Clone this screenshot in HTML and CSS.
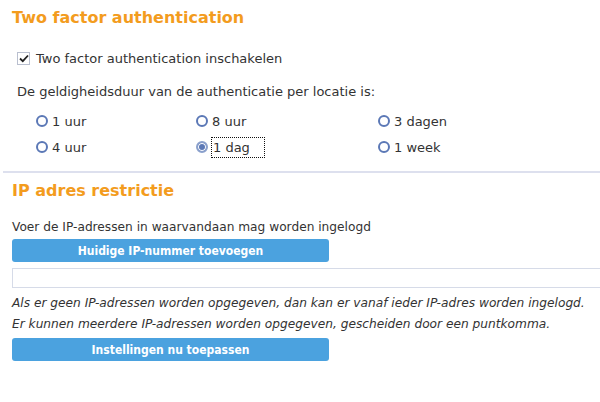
FILE: index.html
```html
<!DOCTYPE html>
<html lang="nl">
<head>
    <meta charset="UTF-8">
    <title>Beveiliging</title>
    <link rel="stylesheet" href="styles.css">
</head>
<body>
    <div class="section">
        <h2>Two factor authentication</h2>

        <label class="check">
            <span class="checkbox">
                <svg width="10" height="9" viewBox="0 0 10 9"><path d="M1 4.5 L3.8 7.2 L9 1.5" fill="none" stroke="#222" stroke-width="1.8"/></svg>
            </span>
            Two factor authentication inschakelen
        </label>

        <p class="intro">De geldigheidsduur van de authenticatie per locatie is:</p>

        <div class="radios">
            <label class="radio"><span class="dot"></span>1 uur</label>
            <label class="radio"><span class="dot"></span>8 uur</label>
            <label class="radio"><span class="dot"></span>3 dagen</label>
            <label class="radio"><span class="dot"></span>4 uur</label>
            <label class="radio selected"><span class="dot"></span><span class="focus">1 dag</span></label>
            <label class="radio"><span class="dot"></span>1 week</label>
        </div>
    </div>

    <div class="section ip">
        <h2>IP adres restrictie</h2>

        <p class="intro">Voer de IP-adressen in waarvandaan mag worden ingelogd</p>
        <button class="btn">Huidige IP-nummer toevoegen</button>
        <input type="text" class="ip-input">

        <p class="hint">Als er geen IP-adressen worden opgegeven, dan kan er vanaf ieder IP-adres worden ingelogd.</p>
        <p class="hint">Er kunnen meerdere IP-adressen worden opgegeven, gescheiden door een puntkomma.</p>

        <button class="btn">Instellingen nu toepassen</button>
    </div>
</body>
</html>
```

FILE: styles.css
```css
body {
    font-family: "DejaVu Sans", Verdana, sans-serif;
    font-size: 12px;
    color: #333;
    background: #fff;
    margin: 0;
}

.section {
    padding: 0 0 0 12px;
}

h2 {
    font-size: 16px;
    font-weight: bold;
    color: #f39c1e;
    margin: 0;
}

.section:first-child h2 {
    padding-top: 8px;
}

.section:first-child {
    font-size: 13px;
}

.check {
    display: flex;
    align-items: center;
    gap: 6px;
    margin: 24px 0 0 5px;
    height: 14px;
}

.checkbox {
    width: 11px;
    height: 11px;
    border: 1px solid #b9bfcf;
    display: flex;
    align-items: center;
    justify-content: center;
}

.intro {
    margin: 0;
}

.section:first-child .intro {
    margin: 19px 0 0 5px;
}

.radios {
    display: grid;
    grid-template-columns: 160px 182px auto;
    row-gap: 8px;
    margin: 13px 0 0 -9px;
    padding: 0 0 15px 33px;
    border-bottom: 2px solid #dde0ee;
}

.radio {
    display: flex;
    align-items: center;
    gap: 4px;
    height: 18px;
}

.dot {
    width: 8px;
    height: 8px;
    border: 2px solid #5b78b6;
    border-radius: 50%;
    background: #fff;
}

.selected .dot {
    background: #5b78b6;
    box-shadow: inset 0 0 0 1px #fff;
    border-color: #8aa0cc;
}

.focus {
    outline: 1px dotted #111;
    padding: 2px 14px 2px 1px;
}

.ip h2 {
    padding-top: 8px;
}

.ip .intro {
    margin-top: 20px;
    font-size: 12.2px;
}

.btn {
    display: block;
    width: 317px;
    height: 23px;
    margin-top: 5px;
    background: #4ba2df;
    color: #fff;
    font-family: "DejaVu Sans Condensed", Tahoma, sans-serif;
    font-weight: bold;
    font-size: 12px;
    border: none;
    border-radius: 3px;
}

.ip-input {
    display: block;
    width: 100%;
    box-sizing: border-box;
    height: 20px;
    margin-top: 6px;
    border: 1px solid #d6dbe8;
    border-right: none;
}

.hint {
    font-style: italic;
    margin: 0;
    line-height: 21px;
    font-size: 12.2px;
}

.ip-input + .hint {
    margin-top: 5px;
}

.hint + .btn {
    margin-top: 3px;
}
```
